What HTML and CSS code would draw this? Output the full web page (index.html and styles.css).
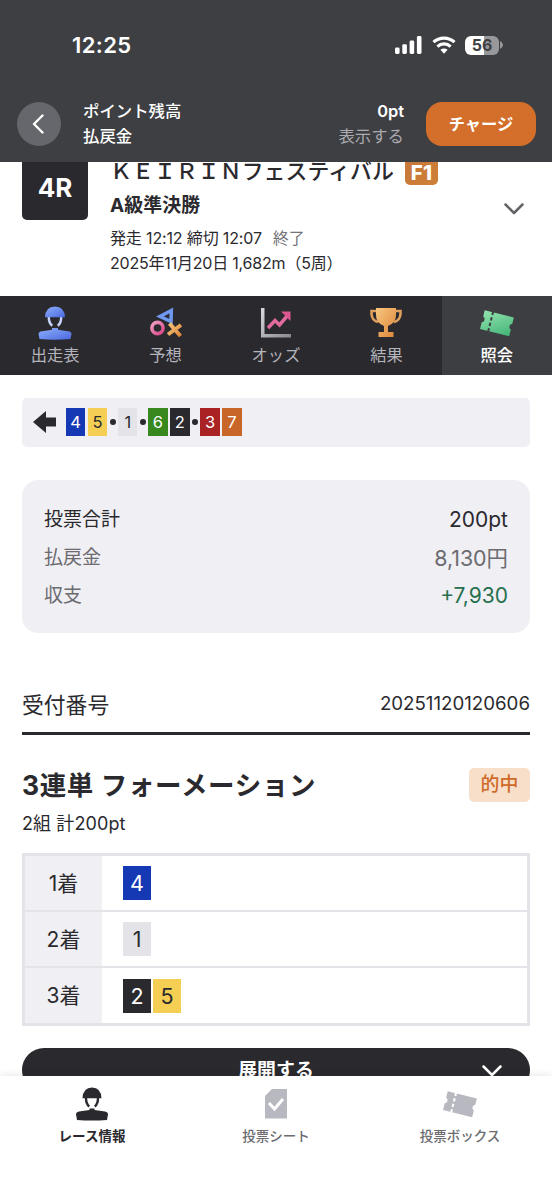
FILE: index.html
```html
<!DOCTYPE html>
<html lang="ja">
<head>
<meta charset="utf-8">
<title>照会</title>
<link rel="stylesheet" href="styles.css">
</head>
<body>
<div class="app">
  <header class="header">
    <div class="status">
      <span class="time">12:25</span>
      <span class="status-icons">
        <svg class="signal" width="27" height="18" viewBox="0 0 27 18" fill="#fff"><rect x="0" y="11.5" width="4.6" height="6.5" rx="1.4"/><rect x="7.3" y="8.2" width="4.6" height="9.8" rx="1.4"/><rect x="14.6" y="4.4" width="4.6" height="13.6" rx="1.4"/><rect x="21.9" y="0" width="4.6" height="18" rx="1.4"/></svg>
        <svg class="wifi" width="24" height="18" viewBox="0 0 24 18"><g fill="none" stroke="#fff" stroke-width="3.2"><path d="M1.500 6.200A15.400 15.400 0 0 1 22.500 6.200"/><path d="M5.400 10.600A9.600 9.600 0 0 1 18.600 10.600"/></g><path d="M8.400 13.800Q12 11 15.600 13.800L12 17.800Z" fill="#fff"/></svg>
        <span class="battery"><span class="level">56</span><svg class="cap" width="3" height="8" viewBox="0 0 3 8"><path d="M0 0Q3 1.500 3 4T0 8Z" fill="#98989b"/></svg></span>
      </span>
    </div>
    <div class="account">
      <span class="back"><svg width="12" height="20" viewBox="0 0 12 20"><path d="M10.500 1.500L2 10L10.500 18.500" fill="none" stroke="#fff" stroke-width="2.400" stroke-linecap="round" stroke-linejoin="round"/></svg></span>
      <div class="balance"><span>ポイント残高</span><span>払戻金</span></div>
      <div class="amounts"><b>0pt</b><span>表示する</span></div>
      <span class="charge">チャージ</span>
    </div>
  </header>

  <main class="content">
    <section class="race">
      <div class="race-no">4R</div>
      <div class="race-info">
        <div class="race-title"><span>ＫＥＩＲＩＮフェスティバル</span><i class="grade">F1</i></div>
        <div class="race-class">A級準決勝</div>
        <div class="race-line race-time">発走 12:12 締切 12:07<span class="ended">終了</span></div>
        <div class="race-line race-date">2025年11月20日 1,682m（5周）</div>
      </div>
      <svg class="race-toggle" width="20" height="12" viewBox="0 0 20 12"><path d="M1.500 1.500L10 10L18.500 1.500" fill="none" stroke="#626267" stroke-width="2.500" stroke-linecap="round" stroke-linejoin="round"/></svg>
    </section>

    <nav class="tabs">
      <div class="tab">
        <svg width="36" height="36" viewBox="0 0 36 36"><defs><linearGradient id="blue" x1="0" y1="0" x2="1" y2="1"><stop offset="0" stop-color="#8eb0fb"/><stop offset="1" stop-color="#4a68df"/></linearGradient></defs><path d="M11.800 11Q11.500 18 15.300 20.800M24.200 11Q24.500 18 20.700 20.800" fill="none" stroke="#c7d3fa" stroke-width="2.400"/><path d="M8 12.300Q8.500 1.500 18 1.500T28 12.300Z" fill="url(#blue)"/><path d="M15 23H21V24.800L32.500 26.500Q34.500 27 34.500 29L33.500 34Q18 35.500 2.500 34L1.500 29Q1.500 27 3.500 26.500L15 24.800Z" fill="url(#blue)"/></svg>
        <span>出走表</span>
      </div>
      <div class="tab">
        <svg width="36" height="36" viewBox="0 0 36 36"><defs><linearGradient id="pink" x1="0" y1="0" x2="1" y2="1"><stop offset="0" stop-color="#f1a0c5"/><stop offset="1" stop-color="#d84585"/></linearGradient><linearGradient id="gold" x1="0" y1="0" x2="1" y2="1"><stop offset="0" stop-color="#f8c77e"/><stop offset="1" stop-color="#dc8538"/></linearGradient></defs><path d="M23.300 5.500L12 11.500L23 16.500Z" fill="none" stroke="#6e99ef" stroke-width="3.500"/><circle cx="9.500" cy="23" r="5.600" fill="none" stroke="url(#pink)" stroke-width="3.600"/><path d="M21.500 18.500L32.500 31M33 20L20 29.500" stroke="url(#gold)" stroke-width="4"/></svg>
        <span>予想</span>
      </div>
      <div class="tab">
        <svg width="36" height="36" viewBox="0 0 36 36"><defs><linearGradient id="axis" x1="0" y1="0" x2="1" y2="1"><stop offset="0" stop-color="#dadbde"/><stop offset="1" stop-color="#88898d"/></linearGradient></defs><path d="M3 3H6.500V29H33V32.500H3Z" fill="url(#axis)"/><path d="M10 23L17 15.500L21.500 20L30 10" fill="none" stroke="#e26b9e" stroke-width="3.500"/><path d="M23 6.500H32.500V16Z" fill="#dc5792"/></svg>
        <span>オッズ</span>
      </div>
      <div class="tab">
        <svg width="36" height="36" viewBox="0 0 36 36"><path d="M9 6H3.500V9Q4 15.500 10 17M27 6H32.500V9Q32 15.500 26 17" fill="none" stroke="#dfa05c" stroke-width="2.600"/><path d="M8 3H28V10Q28 18 20 21V27H25.500V32H10.500V27H16V21Q8 18 8 10Z" fill="url(#gold)"/></svg>
        <span>結果</span>
      </div>
      <div class="tab tab-active">
        <svg width="36" height="36" viewBox="0 0 36 36"><defs><linearGradient id="green" x1="0" y1="0" x2="1" y2="1"><stop offset="0" stop-color="#93e5ae"/><stop offset="1" stop-color="#42b277"/></linearGradient></defs><g transform="rotate(14 18 18)"><path d="M3 8.500H33V15A3.200 3.200 0 0 0 33 21V28H3V21A3.200 3.200 0 0 0 3 15Z" fill="url(#green)"/><path d="M11.500 8V28.500" stroke="#3d3e42" stroke-width="2" stroke-dasharray="3.300 2.400"/></g></svg>
        <span>照会</span>
      </div>
    </nav>

    <div class="lineup">
      <svg width="23" height="22" viewBox="0 0 23 22"><path d="M0 11L13 0V6.500H23V15.500H13V22Z" fill="#2a292e"/></svg>
      <span class="chip blue">4</span><span class="chip yellow">5</span><i class="dot"></i><span class="chip white">1</span><i class="dot"></i><span class="chip green">6</span><span class="chip black">2</span><i class="dot"></i><span class="chip red">3</span><span class="chip orange">7</span>
    </div>

    <dl class="summary">
      <div><dt>投票合計</dt><dd>200pt</dd></div>
      <div class="muted"><dt>払戻金</dt><dd class="payout">8,130円</dd></div>
      <div class="muted profit"><dt>収支</dt><dd>+7,930</dd></div>
    </dl>

    <section class="receipt"><span>受付番号</span><span class="receipt-no">20251120120606</span></section>

    <section class="bet">
      <div class="bet-head"><h2>3連単 フォーメーション</h2><span class="hit">的中</span></div>
      <p class="bet-sub">2組 計200pt</p>
      <div class="picks">
        <div class="pick"><span class="place">1着</span><span class="nums"><span class="chip large blue">4</span></span></div>
        <div class="pick"><span class="place">2着</span><span class="nums"><span class="chip large white">1</span></span></div>
        <div class="pick"><span class="place">3着</span><span class="nums"><span class="chip large black">2</span><span class="chip large yellow">5</span></span></div>
      </div>
      <div class="expand"><span>展開する</span><svg width="20" height="12" viewBox="0 0 20 12"><path d="M1.500 1.500L10 10L18.500 1.500" fill="none" stroke="#fff" stroke-width="2.500" stroke-linecap="round" stroke-linejoin="round"/></svg></div>
    </section>
  </main>

  <nav class="bottom">
    <div class="item item-active">
      <svg width="36" height="36" viewBox="0 0 36 36" fill="#2a292e"><path d="M12 11Q11.800 18 15.300 20.500M24 11Q24.200 18 20.700 20.500" fill="none" stroke="#2a292e" stroke-width="2.400"/><path d="M8.500 12.300Q9 1.500 18 1.500T27.500 12.300Z"/><path d="M15.500 22.500H20.500V24L31 25.500Q34 26 34 28.500L33 34Q18 35 3 34L2 28.500Q2 26 5 25.500L15.500 24Z"/></svg>
      <span>レース情報</span>
    </div>
    <div class="item">
      <svg width="36" height="36" viewBox="0 0 36 36"><path d="M14 3H29V32.500H7V10Z" fill="#b8b8c1"/><path d="M11 17L16.500 23L25 13" fill="none" stroke="#fff" stroke-width="3"/></svg>
      <span>投票シート</span>
    </div>
    <div class="item">
      <svg width="36" height="36" viewBox="0 0 36 36"><g transform="rotate(14 18 18)"><path d="M3 8.500H33V15A3.200 3.200 0 0 0 33 21V28H3V21A3.200 3.200 0 0 0 3 15Z" fill="#b8b8c1"/><path d="M11.500 8V28.500" stroke="#fff" stroke-width="2" stroke-dasharray="3.300 2.400"/></g></svg>
      <span>投票ボックス</span>
    </div>
  </nav>
</div>
</body>
</html>
```
FILE: styles.css
```css
* { box-sizing: border-box; }
body {
  margin: 0;
  background: #fff;
  color: #2a292e;
  font-family: Inter, "Noto Sans CJK JP", sans-serif;
}
.app { display: flex; flex-direction: column; width: 552px; height: 1200px; overflow: hidden; }

.header { flex: none; height: 162px; background: #3e3f43; color: #fff; }
.status { display: flex; justify-content: space-between; align-items: center; height: 90px; padding: 0 49px 0 72px; }
.time { font-size: 22px; font-weight: 600; letter-spacing: 0.5px; }
.status-icons { display: flex; align-items: center; }
.wifi { margin: 0 9px 0 10px; }
.battery { display: flex; align-items: center; gap: 1px; }
.level {
  width: 34px; height: 19px; border-radius: 6px;
  background: linear-gradient(90deg, #fff 56%, #98989b 56%);
  color: #3e3f43; font-size: 16px; font-weight: 700; line-height: 19px; text-align: center;
}
.account { display: flex; align-items: center; height: 67px; padding: 0 16px 0 17px; }
.back { display: flex; align-items: center; justify-content: center; width: 44px; height: 44px; border-radius: 50%; background: #66676c; }
.back svg { margin-right: 2px; }
.balance, .amounts { display: flex; flex-direction: column; padding-top: 1px; font-size: 16.4px; line-height: 25px; font-weight: 500; }
.balance { margin-left: 22px; }
.amounts { margin-left: auto; text-align: right; }
.amounts b { font-weight: 600; }
.amounts span { color: #aaaab0; font-weight: 400; }
.charge { margin-left: 22px; width: 110px; height: 44px; border-radius: 16px; background: #d36f2a; font-size: 16.300px; line-height: 44px; text-align: center; font-weight: 700; }

.content { flex: none; height: 914px; overflow: hidden; }
.race { display: flex; height: 142px; margin-top: -8px; padding: 0 28px 0 22px; }
.race-no { width: 66px; height: 66px; border-radius: 5px; background: #2a292e; color: #fff; font-size: 26px; font-weight: 700; line-height: 67px; text-align: center; }
.race-info { flex: 1; margin-left: 22px; }
.race-title { display: flex; align-items: center; gap: 11px; height: 34px; margin-top: -2px; font-size: 21.900px; font-weight: 500; letter-spacing: 0.05px; }
.grade { width: 33px; height: 32px; border-radius: 5px; background: linear-gradient(135deg, #c6763a, #cf8036); color: #fff; font-size: 20.500px; font-style: normal; font-weight: 800; line-height: 39px; text-align: center; }
.race-class { height: 36px; font-size: 18.900px; font-weight: 700; line-height: 39px; letter-spacing: 0.1px; }
.race-line { height: 25px; font-size: 16px; line-height: 25px; white-space: nowrap; }
.race-time { margin-top: 4px; letter-spacing: -0.15px; }
.race-date { letter-spacing: -0.2px; }
.ended { margin-left: 11px; color: #737378; }
.race-toggle { margin-top: 49px; }

.tabs { display: flex; height: 79px; background: #2a292e; }
.tab { flex: 1; display: flex; flex-direction: column; align-items: center; padding-top: 9px; color: #b4b4bb; font-size: 16.300px; font-weight: 400; line-height: 29px; }
.tab-active { background: #3d3e42; color: #fff; font-weight: 500; }

.lineup { display: flex; align-items: center; gap: 2.500px; height: 49px; margin: 23px 22px 0; padding: 0 11px 1px; border-radius: 5px; background: #f0eff4; }
.lineup svg { margin-right: 7.500px; }
.chip { width: 19.400px; height: 28px; font-size: 16.500px; line-height: 28px; text-align: center; }
.dot { width: 5.800px; height: 5.800px; border-radius: 50%; background: #2a292e; }
.blue { background: #1538b5; color: #fff; }
.yellow { background: #f4cf54; }
.white { background: #e4e4e8; }
.green { background: #388820; color: #fff; }
.black { background: #2a292e; color: #fff; }
.red { background: #a92324; color: #fff; }
.orange { background: #c86528; color: #fff; }

.summary { margin: 33px 22px 0; height: 153px; padding: 21px 22px 0; border-radius: 16px; background: #f0eff4; }
.summary div { display: flex; justify-content: space-between; height: 38px; line-height: 38px; }
.summary dt { font-size: 19px; }
.summary dd { margin: 0; font-size: 21px; }
.summary .payout { font-size: 21.400px; }
.muted { color: #6b6b70; }
.profit dd { color: #27704e; }

.receipt { display: flex; justify-content: space-between; align-items: center; height: 60px; margin: 42px 22px 0; border-bottom: 3px solid #2a292e; font-size: 21.800px; }
.receipt-no { font-size: 18.700px; }

.bet { padding: 31px 22px 0; }
.bet-head { display: flex; justify-content: space-between; align-items: center; height: 38px; }
.bet-head h2 { margin: 0; font-size: 26.500px; font-weight: 700; line-height: 38px; letter-spacing: 0.600px; white-space: nowrap; }
.hit { width: 61px; height: 34px; border-radius: 5px; background: #f7dfca; color: #cf6a28; font-size: 18.900px; font-weight: 500; line-height: 34px; text-align: center; }
.bet-sub { margin: 0; height: 49px; font-size: 18px; line-height: 39px; letter-spacing: 0.100px; }
.picks { border: 3px solid #e3e3e8; }
.pick { display: flex; height: 56px; border-bottom: 2px solid #e3e3e8; }
.pick:last-child { height: 55px; border-bottom: 0; }
.place { width: 77px; background: #f0eff4; font-size: 21px; line-height: 55px; text-align: center; }
.nums { display: flex; align-items: center; gap: 2px; padding-left: 21px; }
.large { width: 28px; height: 34px; font-size: 21.500px; line-height: 34px; }
.expand { display: grid; grid-template-columns: 1fr auto 1fr; align-items: center; height: 44px; margin-top: 22px; padding: 0 28px; border-radius: 22px; background: #2a292e; color: #fff; font-size: 18.900px; font-weight: 700; line-height: 46px; }
.expand span { grid-column: 2; }
.expand svg { justify-self: end; }

.bottom { display: flex; flex: none; height: 124px; background: #fff; box-shadow: 0 0 8px rgba(0, 0, 0, 0.12); position: relative; }
.item { flex: 1; display: flex; flex-direction: column; align-items: center; padding-top: 10px; color: #6b6b70; font-size: 13.500px; font-weight: 500; line-height: 28px; }
.item-active { color: #2a292e; font-weight: 700; }
.time { letter-spacing: 0.4px; }
```
